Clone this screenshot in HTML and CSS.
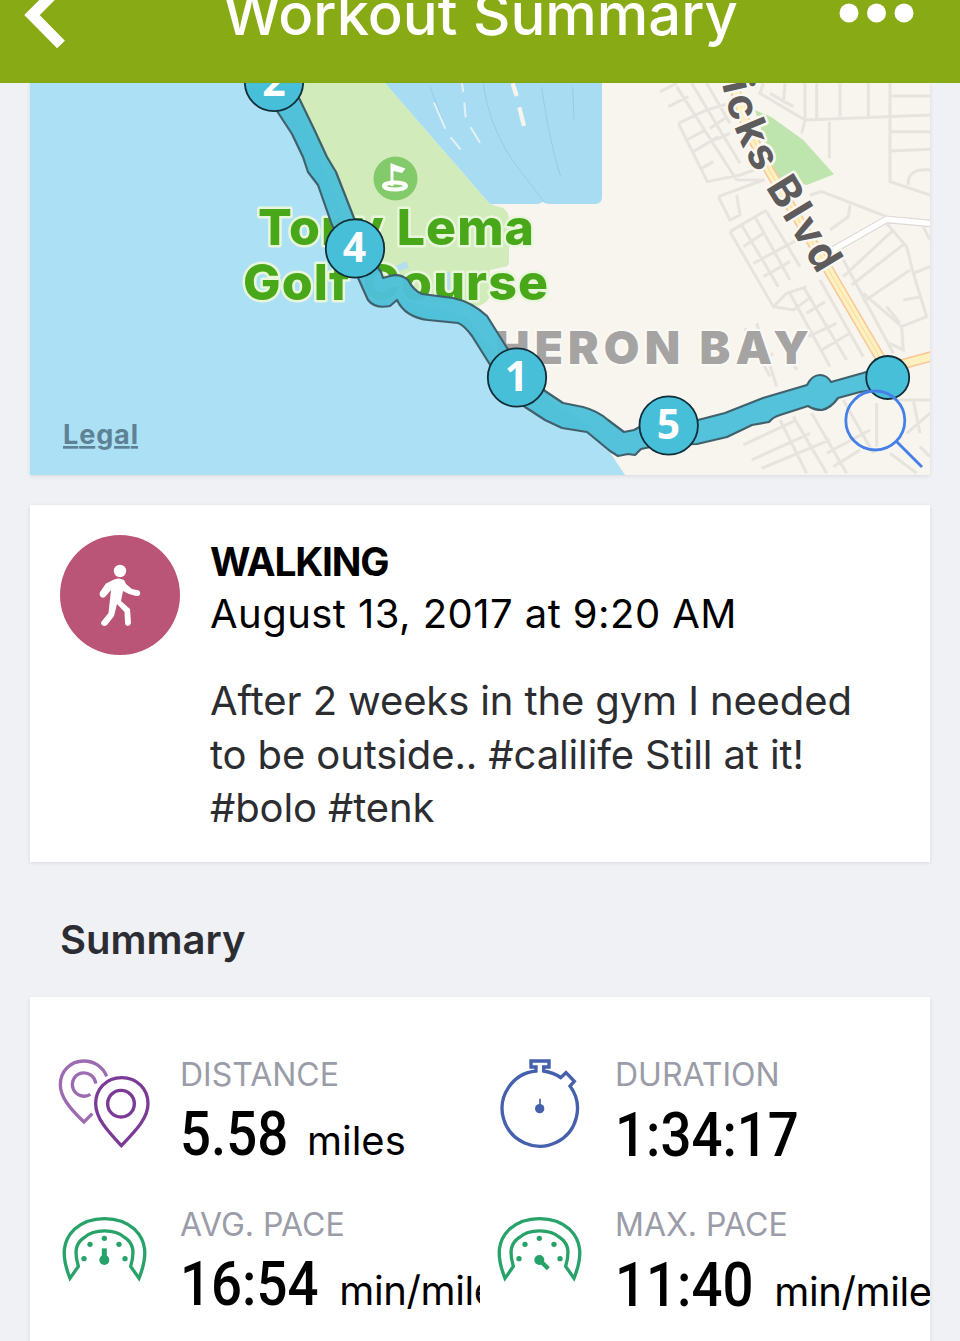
FILE: index.html
```html
<!DOCTYPE html>
<html lang="en">
<head>
  <meta charset="UTF-8">
  <meta name="viewport" content="width=device-width, initial-scale=1.0">
  <title>Workout Summary</title>
  <link rel="stylesheet" href="styles.css">
</head>

<body>
  <header class="top-bar">
    <svg class="back" viewBox="0 0 80 83">
      <path d="M61 -14 L32 15 L61 44.500" />
    </svg>
    <h1>Workout Summary</h1>
    <svg class="more" viewBox="830 0 100 83">
      <circle cx="849" cy="13" r="9.500" />
      <circle cx="876.500" cy="13" r="9.500" />
      <circle cx="904" cy="13" r="9.500" />
    </svg>
  </header>

  <main>
    <section class="card map">
      <svg viewBox="30 83 900 392">
        <rect class="water" x="30" y="83" width="900" height="392" />
        <path class="land" d="M290 83 L365 270 L400 300 L465 315 L517 380 L590 425 L613 457 L625 475 H930 V83 Z" />
        <path class="golf" d="M290 83 H385 L490 204 L503 208 Q509 212 509 220 V262 Q509 267 503 267 L490 270 L489 298 Q486 304 478 306 L400 300 L365 270 Z" />
        <path class="lagoon" d="M385 83 L490 204 H538 L543 202 L548 204 H595 Q602 204 602 197 V83 Z" />
        <path class="creek" d="M396 266 L406 261 L409 268 L399 271 Z M440 272 H450 V290 H440 Z" />

        <!-- lagoon dikes -->
        <g transform="translate(330 80) scale(.3333)">
          <path class="dike-line" d="M460 10 C475 120 520 210 580 285 S625 345 645 368 M635 20 C650 130 670 220 692 290 M728 20 L732 120 M300 20 L345 140" />
          <path class="dike" d="M312 68 L346 146 M362 172 L392 208 M396 10 L400 36 M403 68 L407 112 M422 142 L450 188" />
          <path class="dike wide" d="M548 10 L560 48 M568 82 L582 138" />
        </g>

        <!-- streets -->
        <g transform="translate(630 80) scale(.3333)">
          <path class="park" d="M375 90 L425 112 L520 180 L612 283 L530 315 L440 290 Z" />
          <path class="street" d="M90 35 L140 10 M115 80 L175 50 M140 20 L320 300 M185 10 L330 250 M230 10 L300 130 M145 130 L230 90 L300 70 M145 130 L232 305 L330 285 L400 260 M170 180 L225 150 M190 215 L265 170 M215 265 L250 245 M240 145 L285 115 M255 180 L300 160 M320 300 L405 300 M265 350 L400 300 M265 350 L300 420 L330 405 L320 345 M300 455 L410 390 M300 455 L430 680 L470 640 L530 620 M335 435 L445 620 M375 410 L480 600 M410 395 L510 560 M340 500 L400 460 M370 550 L520 470 M400 590 L480 545 M430 680 L490 690 L545 650 M400 10 L390 40 L525 120 L900 105 M420 40 L490 80 M465 10 L460 70 M525 10 V120 L515 160 M560 10 V115 M630 10 V110 M715 10 V110 M780 10 V305 L900 345 M780 48 H900 M780 155 H900 M780 213 L900 208 M598 125 V235 M835 315 Q830 265 900 270 M540 345 L575 335 L770 410 M660 375 L655 410 L600 450 M480 640 L600 860 M520 620 L650 840 M570 600 L700 830 M590 570 L760 830 M635 530 L790 820 M640 590 L790 450 M665 615 L825 490 M700 665 L840 570 M770 430 L830 500 L850 580 L890 710 L815 740 L700 640 M850 580 L900 560 M880 440 L900 480 M815 740 L820 810 L780 790 M770 680 L810 730 M820 660 L875 650 M530 700 L585 665 M535 770 L620 730 M575 810 L660 760 M380 730 L440 920 M345 745 L420 890 M390 850 L430 820 M440 750 L500 870 M340 1095 L500 1020 M365 1140 L540 1060 M395 1165 L600 1080 M450 1020 L530 1180 M490 1010 L590 1180 M545 1000 L650 1180 M590 1120 L720 1050 M610 1160 L690 1110 M640 960 L730 1120 M740 970 V1100 M790 960 H900 M850 960 L870 1060 M780 1120 L860 1180 M870 1100 L900 1130 M830 1060 L900 1000" />
          <path class="road-edge" d="M600 515 L770 418 L900 430" />
          <path class="road" d="M600 515 L770 418 L900 430" />
          <path class="avenue-edge" d="M300 -20 L350 140 L420 275 L590 560 L760 850 M790 860 L910 828" />
          <path class="avenue" d="M300 -20 L350 140 L420 275 L590 560 L760 850 M790 860 L910 828" />
          <path class="avenue-mid" d="M350 140 L420 275 L590 560 L760 850" />
        </g>

        <!-- golf pin -->
        <circle class="pin" cx="395.500" cy="178.500" r="22" />
        <ellipse class="pin-hole" cx="395" cy="186" rx="11" ry="3.500" />
        <path class="pin-flag" d="M390.500 163 L398 166 L405.500 168.500 L402 173 L393.500 171 V186 H390.500 Z" />

        <text class="place golf-name" x="258" y="245" textLength="276">Tony Lema</text>
        <text class="place golf-name" x="243" y="300" textLength="305">Golf Course</text>
        <text class="place area-name" x="495" y="364" textLength="314">HERON BAY</text>
        <path id="blvd" fill="none" d="M722 84 C728 114 742 150 757 174 C772 198 795 236 819 276" />
        <text class="place street-name"><textPath href="#blvd" textLength="215">icks Blvd</textPath></text>

        <path class="route" d="M274 60 L299 98 L314 129 L327 157 L336 172 L345 195 L354 218 L374 262 L381 272 L383 278 L390 276 Q400 273 408 280 Q414 291 422 294 L453 298 Q472 302 487 316 L507 348 L545 391 L563 403 L583 407 Q598 411 608 420 L624 432 L634 430 L645 424 L669 414 L698 420 L725 413 L763 398 L807 385 Q812 375 820 375 Q827 375 831 382 L863 373 L888 365 V388 L860 392 L838 398 Q831 408 822 410 Q814 410 808 406 L780 415 Q773 417 769 422 L752 425 L727 437 L697 444 L660 445 L641 449 L635 455 L628 454 L618 456 L610 451 L587 432 L562 428 L545 420 L525 407 L489 363 L472 336 Q464 325 458 323 L428 320 Q405 317 397 300 L390 306 Q375 309 368 300 L359 280 L332 225 L318 185 L308 172 L303 157 L292 134 L277 111 Z" />

        <g class="marker">
          <circle cx="274" cy="82" r="29.200" />
          <circle cx="355" cy="248.500" r="29.200" />
          <circle cx="517" cy="377.500" r="29.200" />
          <circle cx="668.700" cy="425.500" r="29.200" />
          <circle cx="887.700" cy="377.500" r="21.500" />
          <text x="274" y="96">2</text>
          <text x="354.500" y="262">4</text>
          <text x="516.500" y="391">1</text>
          <text x="668.500" y="439">5</text>
        </g>

        <text class="legal" x="63" y="444" textLength="75">Legal</text>
        <g class="zoom">
          <circle cx="875.300" cy="420.500" r="29.500" />
          <path d="M896.500 441.500 L922 467" />
        </g>
      </svg>
    </section>

    <section class="card info">
      <svg class="activity" viewBox="0 0 120 120">
        <circle cx="60" cy="60" r="60" fill="#bb5577" />
        <circle cx="60" cy="36" r="6.200" fill="#fff" />
        <path d="M53 45 Q58 42 64 45 L66 49 L72 54 L79 55.500 Q81 57 80 59.500 Q79 61.500 76 61 L69 59 L63 56 L61 66 L70 74 L71 88 Q70 91 67.500 91 Q65 90.500 65 88 L64.500 77 L57 69 L54 81 L47 90 Q44 92 42 90 Q40 88 42 86 L48.500 78 L51 55 L45 62 Q42 64 40 61 Q39 59.500 40 57 L46 48.500 Z" fill="#fff" />
      </svg>
      <div class="details">
        <h2>WALKING</h2>
        <p class="date">August 13, 2017 at 9:20 AM</p>
        <p class="note">After 2 weeks in the gym I needed<br>to be outside.. #calilife Still at it!<br>#bolo #tenk</p>
      </div>
    </section>

    <h3 class="section-title">Summary</h3>

    <section class="card metrics">
      <div class="metric">
        <svg class="icon" viewBox="75 50 300 300" stroke="#7b3a96">
          <path d="M230 108 C218 78 190 62 162 62 C120 62 91 94 91 133 C91 170 120 205 162 245 L187 220" opacity=".75" />
          <path d="M197 130 A35 35 0 1 0 181 162" opacity=".75" />
          <path d="M274 316 C238 277 197 236 197 190 C197 146 229 112 275 112 C321 112 354 146 354 190 C354 236 311 277 274 316 Z" />
          <circle cx="273" cy="190" r="40" />
        </svg>
        <div class="data">
          <span class="label">DISTANCE</span>
          <p class="reading"><b class="value short">5.58</b><span class="unit">miles</span></p>
        </div>
      </div>
      <div class="metric right">
        <svg class="icon" viewBox="30 50 300 300" stroke="#4560ad">
          <path d="M168 92 V80 H153 V62 H207 V80 H191 V92 Q220 96 242 112 L258 97 L283 123 L270 137 A113 113 0 1 1 168 92 Z" />
          <path d="M180 175 V205" stroke-width="5" />
          <circle cx="179" cy="205" r="14" fill="#4560ad" stroke="none" />
        </svg>
        <div class="data">
          <span class="label">DURATION</span>
          <p class="reading"><b class="value">1:34:17</b></p>
        </div>
      </div>
      <div class="metric">
        <svg class="icon" viewBox="75 500 300 300" stroke="#27a268">
          <path d="M120 714 C92 643 99 600 133 567 C180 524 267 524 314 567 C348 600 355 643 327 714 L302 678 C317 627 306 607 285 592 C254 565 193 565 162 592 C141 607 130 627 145 678 Z" />
          <g fill="#27a268" stroke="none">
            <circle cx="162" cy="655" r="8" /><circle cx="180" cy="612" r="8" /><circle cx="223" cy="594" r="8" /><circle cx="267" cy="612" r="8" /><circle cx="285" cy="655" r="8" />
            <circle cx="223" cy="659" r="15" />
          </g>
          <path d="M223 659 V624" stroke-width="15" />
        </svg>
        <div class="data">
          <span class="label">AVG. PACE</span>
          <p class="reading"><b class="value">16:54</b><span class="unit">min/mile</span></p>
        </div>
      </div>
      <div class="metric right">
        <svg class="icon" viewBox="30 500 300 300" stroke="#27a268">
          <path d="M75 714 C47 643 54 600 88 567 C135 524 222 524 269 567 C303 600 310 643 282 714 L257 678 C272 627 261 607 240 592 C209 565 148 565 117 592 C96 607 85 627 100 678 Z" />
          <g fill="#27a268" stroke="none">
            <circle cx="117" cy="655" r="8" /><circle cx="135" cy="612" r="8" /><circle cx="178" cy="594" r="8" /><circle cx="222" cy="612" r="8" /><circle cx="240" cy="655" r="8" />
            <circle cx="178" cy="659" r="15" />
          </g>
          <path d="M178 659 L205 685" stroke-width="13" />
        </svg>
        <div class="data">
          <span class="label">MAX. PACE</span>
          <p class="reading"><b class="value">11:40</b><span class="unit">min/mile</span></p>
        </div>
      </div>
    </section>
  </main>
</body>
</html>
```
FILE: styles.css
```css
* {
  margin: 0;
  padding: 0;
  box-sizing: border-box;
}

body {
  width: 100%;
  height: 1341px;
  overflow: hidden;
  background: #eff1f5;
  font-family: Inter, "Liberation Sans", sans-serif;
  color: #000;
}

svg {
  display: block;
}

.top-bar {
  display: flex;
  justify-content: space-between;
  height: 83px;
  background: #88aa14;
  overflow: hidden;
}

.top-bar h1 {
  margin-top: -21px;
  padding-left: 51px;
  font-size: 58px;
  font-weight: 500;
  line-height: 70px;
  white-space: nowrap;
  color: #fff;
}

.back {
  flex: none;
  width: 80px;
  height: 83px;
  fill: none;
  stroke: #fff;
  stroke-width: 11;
}

.more {
  flex: none;
  width: 100px;
  height: 83px;
  margin-right: 30px;
  fill: #fff;
}

main {
  padding: 0 30px;
}

.card {
  background: #fff;
  box-shadow: 0 1px 4px rgba(0, 0, 0, 0.1);
}

/* map */
.map {
  height: 392px;
}

.map svg {
  width: 900px;
  height: 392px;
}

.water { fill: #ace0f4; }
.land { fill: #f8f4ee; }
.golf { fill: #d1ecba; }
.lagoon { fill: #a8dcf3; }
.creek { fill: #b3dff0; }
.park { fill: #bfe5ae; }

.dike-line {
  fill: none;
  stroke: #97cbe6;
  stroke-width: 3;
}

.dike {
  fill: none;
  stroke: #e4f1f6;
  stroke-width: 6;
}

.dike.wide {
  stroke: #f6f4ef;
  stroke-width: 13;
}

.street {
  fill: none;
  stroke: #e7e3df;
  stroke-width: 9;
}

.road-edge, .road, .avenue-edge, .avenue, .avenue-mid {
  fill: none;
  stroke: #ddd9d6;
  stroke-width: 23;
}

.road {
  stroke: #fff;
  stroke-width: 16;
}

.avenue-edge {
  stroke: #f8c795;
  stroke-width: 32;
}

.avenue {
  stroke: #fff0c0;
  stroke-width: 23;
}

.avenue-mid {
  stroke: #f5dba0;
  stroke-width: 3;
}

.pin { fill: #83ca6b; }
.pin-flag { fill: #fff; }

.pin-hole {
  fill: none;
  stroke: #fff;
  stroke-width: 4;
}

.place {
  paint-order: stroke;
  stroke-linejoin: round;
}

.golf-name {
  font-size: 50px;
  font-weight: 800;
  fill: #49a81a;
  stroke: #e8f6dc;
  stroke-width: 5px;
}

.area-name {
  font-size: 46px;
  font-weight: 900;
  fill: #a6a4a2;
  stroke: #fbf9f5;
  stroke-width: 4px;
}

.street-name {
  font-size: 43px;
  font-weight: 700;
  fill: #5d5b5c;
  stroke: #faf7f2;
  stroke-width: 5px;
}

.route {
  fill: #4dbfd9;
  fill-opacity: 0.96;
  stroke: #40616c;
  stroke-width: 2.2px;
  stroke-linejoin: round;
}

.marker circle {
  fill: #48bfd9;
  stroke: #102d38;
  stroke-width: 1.8px;
}

.marker text {
  font-family: "Noto Sans", sans-serif;
  font-size: 41px;
  font-weight: 700;
  text-anchor: middle;
  fill: #fff;
}

.legal {
  font-size: 27px;
  font-weight: 700;
  fill: #5d8296;
  text-decoration: underline;
}

.zoom {
  fill: none;
  stroke: #4680e6;
  stroke-width: 2.8px;
}

/* workout info */
.info {
  display: flex;
  gap: 30px;
  height: 357px;
  margin-top: 30px;
  padding: 31px 30px 30px;
}

.activity {
  flex: none;
  width: 120px;
  height: 120px;
  margin-top: -1px;
}

.details {
  font-size: 40px;
  line-height: 52px;
  white-space: nowrap;
}

.details h2 {
  font-size: 39px;
  font-weight: 700;
  letter-spacing: -1.2px;
}

.date {
  letter-spacing: 0.45px;
}

.note {
  margin-top: 34px;
  line-height: 53.5px;
  letter-spacing: -0.12px;
  color: #2c2d31;
}

.section-title {
  height: 135px;
  padding: 52px 30px 0;
  font-size: 40px;
  font-weight: 600;
  line-height: 52px;
  color: #2c2d33;
}

/* metrics */
.metrics {
  display: grid;
  grid-template-columns: 450px 450px;
  grid-auto-rows: 150px;
  height: 400px;
  padding-top: 60px;
}

.metric {
  display: flex;
  padding-left: 25px;
  overflow: hidden;
}

.metric.right {
  padding-left: 10px;
}

.icon {
  flex: none;
  width: 100px;
  height: 100px;
  margin-right: 25px;
  fill: none;
  stroke-width: 10;
}

.data {
  white-space: nowrap;
}

.label {
  display: block;
  font-size: 32px;
  line-height: 36px;
  color: #9a9ca8;
}

.reading {
  display: flex;
  align-items: baseline;
  margin-top: 6px;
  line-height: 70px;
}

.right .reading {
  margin-top: 7px;
}

.value {
  font-family: Roboto, sans-serif;
  font-size: 62px;
  font-weight: 500;
  transform: scaleX(0.88);
  transform-origin: left;
}

.unit {
  margin-left: 2px;
  font-size: 40px;
  letter-spacing: -0.4px;
}

.short + .unit {
  margin-left: 4px;
  letter-spacing: 0;
}
```
